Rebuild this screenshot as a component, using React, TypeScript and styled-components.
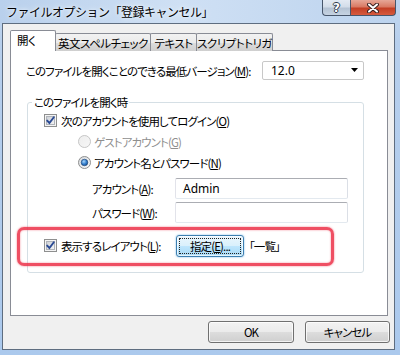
import React, { useId } from "react";
import styled, { createGlobalStyle, css } from "styled-components";

const Global = createGlobalStyle`
  html, body { margin: 0; padding: 0; }
  body {
    width: 400px; height: 355px; overflow: hidden;
    font-family: "Noto Sans CJK JP", "Noto Sans", sans-serif;
    font-size: 11.5px; color: #000;
    font-feature-settings: "palt";
    letter-spacing: -0.9px;
  }
  * { box-sizing: border-box; }
`;

const Window = styled.div`
  width: 400px;
  height: 355px;
  display: flex;
  flex-direction: column;
  background: linear-gradient(180deg, #c2d7f0 0%, #b7cfec 12%, #abc9ed 100%);
`;

const TitleBar = styled.div`
  height: 23px;
  flex: none;
  display: flex;
  align-items: center;
  padding-left: 6px;
  background: linear-gradient(90deg, #b9d0ec 0%, #cfe0f4 45%, #bcd3ee 100%);
`;

const Title = styled.div`
  font-size: 12px;
  letter-spacing: -0.5px;
  font-feature-settings: normal;
  line-height: 23px;
  color: #000;
  text-shadow: 0 0 6px #eef5ff, 0 0 3px #eef5ff;
  white-space: nowrap;
`;

const CaptionGroup = styled.div`
  margin-left: auto;
  margin-right: 4px;
  align-self: flex-start;
  display: flex;
  height: 16px;
`;

const CaptionButton = styled.div<{ $kind: "help" | "close" }>`
  height: 16px;
  display: flex;
  align-items: center;
  justify-content: center;
  border: 1px solid #47566b;
  border-top: none;
  letter-spacing: 0;
  ${(p) =>
    p.$kind === "help"
      ? css`
          width: 28px;
          border-right: none;
          border-bottom-left-radius: 4px;
          background: linear-gradient(180deg, #e3eaf3 0%, #d3dde9 45%, #b5c3d4 55%, #c6d3e2 100%);
          color: #fff;
          font: bold 12px "DejaVu Sans", sans-serif;
          text-shadow: 1px 0 0 #2c3a4c, -1px 0 0 #2c3a4c, 0 1px 0 #2c3a4c, 0 -1px 0 #2c3a4c;
        `
      : css`
          width: 46px;
          border-bottom-right-radius: 4px;
          background: linear-gradient(180deg, #e6a797 0%, #d97a64 45%, #c33f25 55%, #d65a3e 100%);
        `}
`;

const Client = styled.div`
  flex: 1;
  margin: 0 5px 5px 2px;
  border: 1px solid #5e6d80;
  background: #f0f0f0;
  display: flex;
  flex-direction: column;
  padding: 7px 4px 0 7px;
`;

const TabStrip = styled.div`
  display: flex;
  align-items: flex-end;
  height: 20px;
  margin-bottom: -1px;
  position: relative;
  z-index: 1;
`;

const Tab = styled.div<{ $active?: boolean; $w: number }>`
  width: ${(p) => p.$w}px;
  flex: none;
  margin-left: -1px;
  &:first-child { margin-left: 0; }
  display: flex;
  justify-content: center;
  border: 1px solid #898c95;
  border-bottom: none;
  border-radius: 2px 2px 0 0;
  white-space: nowrap;
  letter-spacing: -0.5px;
  line-height: 14px;
  ${(p) =>
    p.$active
      ? css`
          height: 21px;
          background: #fff;
          padding-top: 2px;
          justify-content: flex-start;
          padding-left: 6px;
          position: relative;
          z-index: 2;
        `
      : css`
          height: 18px;
          padding-top: 2px;
          background: linear-gradient(180deg, #f2f2f2 0%, #ebebeb 50%, #dddddd 51%, #cfcfcf 100%);
        `}
`;

const Panel = styled.div`
  position: relative;
  width: 378px;
  height: 266px;
  background: #fff;
  border: 1px solid #898c95;
  padding: 10px 23px 0 15px;
  display: flex;
  flex-direction: column;
`;

const VersionRow = styled.div`
  display: flex;
  align-items: center;
  height: 19px;
`;

const Label = styled.span<{ $disabled?: boolean; $w?: number }>`
  white-space: nowrap;
  color: ${(p) => (p.$disabled ? "#8f8f8f" : "#000")};
  ${(p) => (p.$w ? `width: ${p.$w}px; flex: none;` : "")}
  u { text-decoration: underline; text-underline-offset: 1px; }
`;

const Note = styled(Label)`
  margin-left: 1px;
`;

const Dropdown = styled.div`
  margin-left: auto;
  width: 102px;
  height: 19px;
  border: 1px solid #c8c8c8;
  border-radius: 2px;
  background: #fff;
  display: flex;
  align-items: center;
  padding: 0 4px 0 8px;
  justify-content: space-between;
`;

const DropValue = styled.span`
  font-family: "Noto Sans", sans-serif;
  font-size: 12px;
  letter-spacing: 0;
`;

const Group = styled.fieldset`
  margin: 14px 0 0 1px;
  padding: 0;
  border: 1px solid #d5dfe5;
  border-radius: 3px;
  min-width: 0;
`;

const Legend = styled.legend`
  margin-left: 4px;
  padding: 0 2px;
  line-height: 16px;
  height: 16px;
`;

const GroupBody = styled.div`
  display: flex;
  flex-direction: column;
  padding: 0 0 15px 16px;
`;

const Row = styled.div<{ $indent?: number; $top?: number; $h?: number; $gap?: number }>`
  display: flex;
  align-items: center;
  height: ${(p) => p.$h ?? 21}px;
  margin-left: ${(p) => p.$indent ?? 0}px;
  margin-top: ${(p) => p.$top ?? 0}px;
  gap: ${(p) => p.$gap ?? 4}px;
`;

const TextBox = styled.div`
  width: 173px;
  height: 21px;
  border: 1px solid;
  border-color: #abadb3 #dbdfe6 #e3e9ef #e2e3ea;
  border-radius: 2px;
  display: flex;
  align-items: center;
  padding-left: 7px;
  font-family: "Noto Sans", "Noto Sans CJK JP", sans-serif;
  font-size: 12px;
  letter-spacing: 0;
`;

const PushButton = styled.div<{ $w: number; $focus?: boolean }>`
  width: ${(p) => p.$w}px;
  height: 22px;
  flex: none;
  display: flex;
  align-items: center;
  justify-content: center;
  border-radius: 3px;
  position: relative;
  white-space: nowrap;
  ${(p) =>
    p.$focus
      ? css`
          border: 1px solid #3c7fb1;
          background: linear-gradient(180deg, #eaf6fd 0%, #d9f0fc 50%, #bee6fd 51%, #a7d9f5 100%);
          box-shadow: inset 0 0 0 1px rgba(255, 255, 255, 0.7), 0 0 2px #6fb4e4;
          &::after {
            content: "";
            position: absolute;
            inset: 2px;
            border: 1px dotted #222;
          }
        `
      : css`
          border: 1px solid #707070;
          background: linear-gradient(180deg, #f2f2f2 0%, #ebebeb 50%, #dddddd 51%, #cfcfcf 100%);
          box-shadow: inset 0 0 0 1px rgba(255, 255, 255, 0.75);
        `}
`;

const Footer = styled.div`
  display: flex;
  justify-content: flex-end;
  gap: 11px;
  margin-top: 5px;
`;

const Highlight = styled.div`
  position: absolute;
  left: 6px;
  top: 176px;
  width: 317px;
  height: 39px;
  border: 3px solid rgba(236, 48, 72, 0.85);
  border-radius: 7px;
  box-shadow: 0 0 2px rgba(236, 48, 72, 0.7), inset 0 0 2px rgba(236, 48, 72, 0.6);
  pointer-events: none;
`;

const Mn = ({ k }: { k: string }) => (
  <>
    (<u>{k}</u>)
  </>
);

const CheckBox = () => {
  const id = useId();
  return (
    <svg width="13" height="13" viewBox="0 0 13 13" style={{ flex: "none" }}>
      <defs>
        <linearGradient id={id} x1="0" y1="0" x2="1" y2="1">
          <stop offset="0" stopColor="#cbcfd5" />
          <stop offset="1" stopColor="#f6f6f6" />
        </linearGradient>
      </defs>
      <rect x="0.5" y="0.5" width="12" height="12" fill="#f4f4f4" stroke="#8e8f8f" />
      <rect x="2.5" y="2.5" width="8" height="8" fill={`url(#${id})`} stroke="#b0b4ba" />
      <path d="M3.2 6.6 L5.4 9 L9.8 3.2" fill="none" stroke="#2a4a94" strokeWidth="1.9" strokeLinecap="round" />
    </svg>
  );
};

const Radio = ({ checked, disabled }: { checked?: boolean; disabled?: boolean }) => {
  const id = useId();
  return (
    <svg width="13" height="13" viewBox="0 0 13 13" style={{ flex: "none" }}>
      <defs>
        <linearGradient id={id + "a"} x1="0" y1="0" x2="1" y2="1">
          <stop offset="0" stopColor={disabled ? "#ededed" : "#d4d7db"} />
          <stop offset="1" stopColor={disabled ? "#f7f7f7" : "#fbfbfb"} />
        </linearGradient>
        <radialGradient id={id + "b"} cx="0.4" cy="0.35" r="0.7">
          <stop offset="0" stopColor="#a6d6fb" />
          <stop offset="0.6" stopColor="#2d78c8" />
          <stop offset="1" stopColor="#1c4f90" />
        </radialGradient>
      </defs>
      <circle cx="6.5" cy="6.5" r="6" fill={`url(#${id}a)`} stroke={disabled ? "#c5c5c5" : "#8e8f8f"} />
      {checked && <circle cx="6.5" cy="6.5" r="3.3" fill={`url(#${id}b)`} stroke="#1b3f70" strokeWidth="0.6" />}
    </svg>
  );
};

const CloseGlyph = () => (
  <svg width="12" height="10" viewBox="0 0 12 10">
    <path d="M2 1.5 L10 8.5 M10 1.5 L2 8.5" stroke="#3a2020" strokeWidth="4" strokeLinecap="round" />
    <path d="M2 1.5 L10 8.5 M10 1.5 L2 8.5" stroke="#fff" strokeWidth="2" strokeLinecap="round" />
  </svg>
);

const Arrow = () => (
  <svg width="8" height="5" viewBox="0 0 8 5">
    <path d="M0 0 H7 L3.5 4 Z" fill="#000" />
  </svg>
);

export default function App() {
  return (
    <>
      <Global />
      <Window>
        <TitleBar>
          <Title>ファイルオプション「登録キャンセル」</Title>
          <CaptionGroup>
            <CaptionButton $kind="help">?</CaptionButton>
            <CaptionButton $kind="close">
              <CloseGlyph />
            </CaptionButton>
          </CaptionGroup>
        </TitleBar>
        <Client>
          <TabStrip>
            <Tab $active $w={46}>開く</Tab>
            <Tab $w={96}>英文スペルチェック</Tab>
            <Tab $w={47}>テキスト</Tab>
            <Tab $w={77}>スクリプトトリガ</Tab>
          </TabStrip>
          <Panel>
            <VersionRow>
              <Label>
                このファイルを開くことのできる最低バージョン<Mn k="M" />:
              </Label>
              <Dropdown>
                <DropValue>12.0</DropValue>
                <Arrow />
              </Dropdown>
            </VersionRow>
            <Group>
              <Legend>このファイルを開く時</Legend>
              <GroupBody>
                <Row>
                  <CheckBox />
                  <Label>
                    次のアカウントを使用してログイン<Mn k="O" />
                  </Label>
                </Row>
                <Row $indent={34} $gap={3}>
                  <Radio disabled />
                  <Label $disabled>
                    ゲストアカウント<Mn k="G" />
                  </Label>
                </Row>
                <Row $indent={34} $gap={3}>
                  <Radio checked />
                  <Label>
                    アカウント名とパスワード<Mn k="N" />
                  </Label>
                </Row>
                <Row $indent={48} $top={5} $gap={0}>
                  <Label $w={83}>
                    アカウント<Mn k="A" />:
                  </Label>
                  <TextBox>Admin</TextBox>
                </Row>
                <Row $indent={48} $top={3} $gap={0}>
                  <Label $w={83}>
                    パスワード<Mn k="W" />:
                  </Label>
                  <TextBox />
                </Row>
                <Row $top={11} $h={23} $gap={4}>
                  <CheckBox />
                  <Label $w={111}>
                    表示するレイアウト<Mn k="L" />:
                  </Label>
                  <PushButton $w={68} $focus>
                    指定<Mn k="E" />...
                  </PushButton>
                  <Note>「一覧」</Note>
                </Row>
              </GroupBody>
            </Group>
            <Highlight />
          </Panel>
          <Footer>
            <PushButton $w={86}>OK</PushButton>
            <PushButton $w={85}>キャンセル</PushButton>
          </Footer>
        </Client>
      </Window>
    </>
  );
}
